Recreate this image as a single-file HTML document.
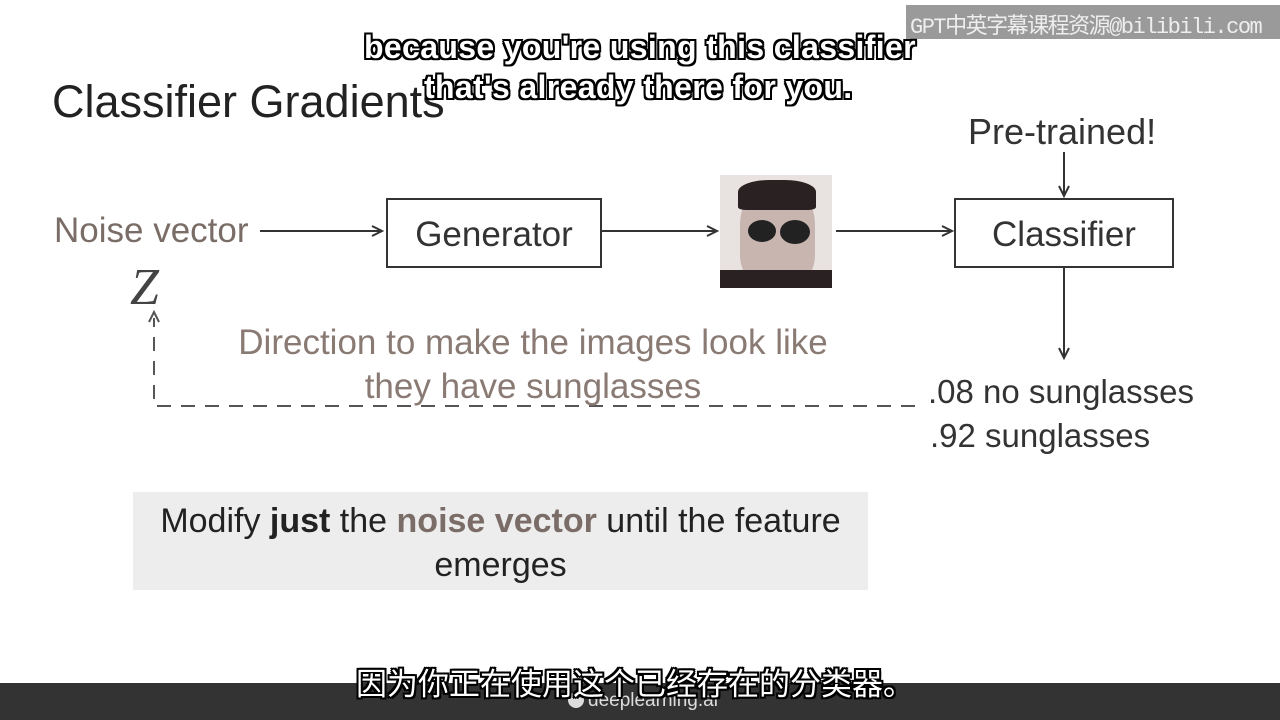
<!DOCTYPE html>
<html><head><meta charset="utf-8"><style>
body{margin:0;width:1280px;height:720px;background:#fff;position:relative;overflow:hidden;font-family:"Liberation Sans","Noto Sans CJK SC",sans-serif}
.a{position:absolute;white-space:nowrap}
.sub{color:#fff;font-size:32px;font-weight:bold;letter-spacing:0.35px;text-shadow:-2px -2px 0 #000,2px -2px 0 #000,-2px 2px 0 #000,2px 2px 0 #000,0 2px 0 #000,0 -2px 0 #000,2px 0 0 #000,-2px 0 0 #000}
.box{position:absolute;border:2px solid #333;background:#fff;font-size:35px;color:#333;display:flex;align-items:center;justify-content:center;box-sizing:border-box;padding-top:4px}
</style></head><body>
<div class="a" style="left:52px;top:76px;font-size:45px;color:#222">Classifier Gradients</div>
<div class="a" style="left:968px;top:111px;font-size:36px;color:#333">Pre-trained!</div>
<div class="a" style="left:54px;top:211px;font-size:35px;color:#7a6c66">Noise vector</div>
<div class="a" style="left:130px;top:258px;font-size:52px;color:#444;font-family:'Liberation Serif',serif;font-style:italic">Z</div>
<div class="box" style="left:386px;top:198px;width:216px;height:70px">Generator</div>
<div class="box" style="left:954px;top:198px;width:220px;height:70px">Classifier</div>
<div style="position:absolute;left:720px;top:175px;width:112px;height:113px;background:#e8e2e0;overflow:hidden">
 <div style="position:absolute;left:20px;top:10px;width:75px;height:100px;background:#c9b5b0;border-radius:40% 40% 30% 30%"></div>
 <div style="position:absolute;left:18px;top:5px;width:78px;height:30px;background:#2a2222;border-radius:40% 40% 10% 10%"></div>
 <div style="position:absolute;left:28px;top:45px;width:28px;height:22px;background:#222;border-radius:50%"></div>
 <div style="position:absolute;left:60px;top:45px;width:30px;height:24px;background:#222;border-radius:50%"></div>
 <div style="position:absolute;left:0;top:95px;width:112px;height:20px;background:#2a2222"></div>
</div>
<svg class="a" style="left:0;top:0" width="1280" height="720">
<g stroke="#333" stroke-width="2" fill="none">
<line x1="260" y1="231" x2="380" y2="231"/><polyline points="372,226 382,231 372,236"/>
<line x1="602" y1="231" x2="715" y2="231"/><polyline points="707,226 717,231 707,236"/>
<line x1="836" y1="231" x2="950" y2="231"/><polyline points="942,226 952,231 942,236"/>
<line x1="1064" y1="152" x2="1064" y2="194"/><polyline points="1059,186 1064,196 1069,186"/>
<line x1="1064" y1="268" x2="1064" y2="356"/><polyline points="1059,348 1064,358 1069,348"/>
<g stroke="#555" stroke-dasharray="14,10"><polyline points="915,406 154,406 154,318"/></g>
<polyline stroke="#555" points="149,322 154,312 159,322"/>
</g></svg>
<div class="a" style="left:233px;top:321px;font-size:35px;color:#8a7a74;text-align:center;width:600px;line-height:44px;white-space:normal">Direction to make the images look like<br>they have sunglasses</div>
<div class="a" style="left:928px;top:370px;font-size:33px;color:#333;line-height:44px">.08 no sunglasses<br><span style="padding-left:2px">.92 sunglasses</span></div>
<div class="a" style="left:133px;top:492px;width:735px;height:98px;background:#eeeded;font-size:34px;color:#222;text-align:center;line-height:44px;white-space:normal;padding-top:7px;box-sizing:border-box">Modify <b>just</b> the <b style="color:#7a6c66">noise vector</b> until the feature<br>emerges</div>
<div class="a" style="left:0;top:683px;width:1280px;height:37px;background:#333"></div>
<div class="a" style="left:568px;top:690px;font-size:19px;color:#ddd"><span style="display:inline-block;width:16px;height:16px;border-radius:50%;background:#ddd;vertical-align:-2px;margin-right:4px"></span>deeplearning.ai</div>
<div class="a" style="left:906px;top:5px;width:374px;height:34px;background:rgba(120,120,120,.75)"></div>
<div class="a" style="left:910px;top:8px;font-size:22px;color:#eee;font-family:'Liberation Mono','Noto Sans CJK SC',monospace;letter-spacing:-1.5px">GPT中英字幕课程资源@bilibili.com</div>
<div class="a sub" style="left:364px;top:29px">because you're using this classifier</div>
<div class="a sub" style="left:424px;top:69px">that's already there for you.</div>
<div class="a sub" style="left:356px;top:659px;font-size:31px;font-weight:normal;letter-spacing:0">因为你正在使用这个已经存在的分类器。</div>
</body></html>
